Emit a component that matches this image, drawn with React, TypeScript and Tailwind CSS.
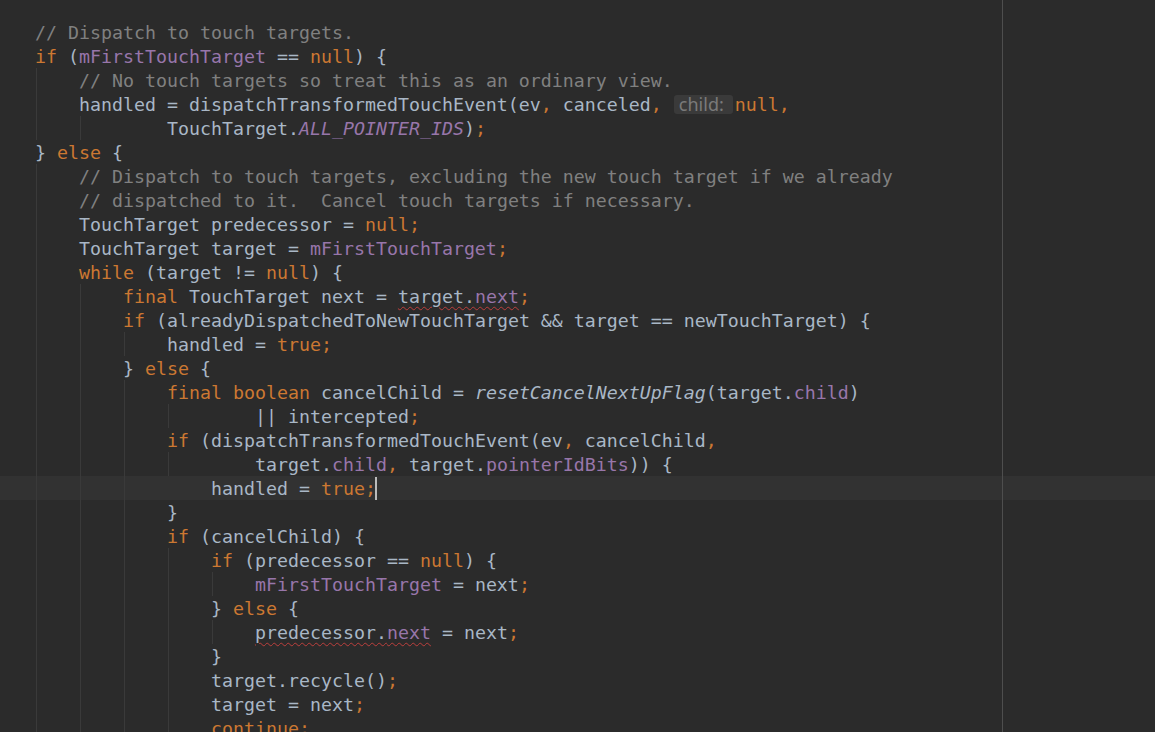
import React from 'react';

type Kind = 'd' | 'k' | 'f' | 'c' | 'i' | 's';
type Seg =
  | { t: string; k?: Kind }
  | { err: { t: string; k?: Kind }[] }
  | { hint: string };

const tone: Record<Kind, string> = {
  d: '',
  k: 'text-[#cc7832]',
  f: 'text-[#9876aa]',
  c: 'text-[#808080]',
  i: 'italic',
  s: 'italic text-[#9876aa]',
};

const guideLeft: Record<number, string> = {
  0: 'left-[36px]',
  4: 'left-[80px]',
  8: 'left-[124px]',
  12: 'left-[168px]',
  16: 'left-[212px]',
};

const s = (t: string, k?: Kind): Seg => ({ t, k });

// each line: segments + indent guide columns
const lines: { segs: Seg[]; guides: number[] }[] = [
  { segs: [s('// Dispatch to touch targets.', 'c')], guides: [] },
  { segs: [s('if', 'k'), s(' ('), s('mFirstTouchTarget', 'f'), s(' == '), s('null', 'k'), s(') {')], guides: [] },
  { segs: [s('    '), s('// No touch targets so treat this as an ordinary view.', 'c')], guides: [0] },
  {
    segs: [
      s('    handled = dispatchTransformedTouchEvent(ev'),
      s(',', 'k'),
      s(' canceled'),
      s(',', 'k'),
      s(' '),
      { hint: 'child:' },
      s('null', 'k'),
      s(',', 'k'),
    ],
    guides: [0],
  },
  { segs: [s('            TouchTarget.'), s('ALL_POINTER_IDS', 's'), s(')'), s(';', 'k')], guides: [0, 4] },
  { segs: [s('} '), s('else', 'k'), s(' {')], guides: [] },
  { segs: [s('    '), s('// Dispatch to touch targets, excluding the new touch target if we already', 'c')], guides: [0] },
  { segs: [s('    '), s('// dispatched to it.  Cancel touch targets if necessary.', 'c')], guides: [0] },
  { segs: [s('    TouchTarget predecessor = '), s('null', 'k'), s(';', 'k')], guides: [0] },
  { segs: [s('    TouchTarget target = '), s('mFirstTouchTarget', 'f'), s(';', 'k')], guides: [0] },
  { segs: [s('    '), s('while', 'k'), s(' (target != '), s('null', 'k'), s(') {')], guides: [0] },
  {
    segs: [s('        '), s('final', 'k'), s(' TouchTarget next = '), { err: [{ t: 'target.' }, { t: 'next', k: 'f' }] }, s(';', 'k')],
    guides: [0, 4],
  },
  {
    segs: [s('        '), s('if', 'k'), s(' (alreadyDispatchedToNewTouchTarget && target == newTouchTarget) {')],
    guides: [0, 4],
  },
  { segs: [s('            handled = '), s('true', 'k'), s(';', 'k')], guides: [0, 4, 8] },
  { segs: [s('        } '), s('else', 'k'), s(' {')], guides: [0, 4] },
  {
    segs: [
      s('            '),
      s('final boolean', 'k'),
      s(' cancelChild = '),
      s('resetCancelNextUpFlag', 'i'),
      s('(target.'),
      s('child', 'f'),
      s(')'),
    ],
    guides: [0, 4, 8],
  },
  { segs: [s('                    || intercepted'), s(';', 'k')], guides: [0, 4, 8, 12] },
  {
    segs: [s('            '), s('if', 'k'), s(' (dispatchTransformedTouchEvent(ev'), s(',', 'k'), s(' cancelChild'), s(',', 'k')],
    guides: [0, 4, 8],
  },
  {
    segs: [s('                    target.'), s('child', 'f'), s(',', 'k'), s(' target.'), s('pointerIdBits', 'f'), s(')) {')],
    guides: [0, 4, 8, 12],
  },
  { segs: [s('                handled = '), s('true', 'k'), s(';', 'k')], guides: [0, 4, 8] },
  { segs: [s('            }')], guides: [0, 4, 8] },
  { segs: [s('            '), s('if', 'k'), s(' (cancelChild) {')], guides: [0, 4, 8] },
  { segs: [s('                '), s('if', 'k'), s(' (predecessor == '), s('null', 'k'), s(') {')], guides: [0, 4, 8, 12] },
  { segs: [s('                    '), s('mFirstTouchTarget', 'f'), s(' = next'), s(';', 'k')], guides: [0, 4, 8, 12, 16] },
  { segs: [s('                } '), s('else', 'k'), s(' {')], guides: [0, 4, 8, 12] },
  {
    segs: [s('                    '), { err: [{ t: 'predecessor.' }, { t: 'next', k: 'f' }] }, s(' = next'), s(';', 'k')],
    guides: [0, 4, 8, 12, 16],
  },
  { segs: [s('                }')], guides: [0, 4, 8, 12] },
  { segs: [s('                target.recycle()'), s(';', 'k')], guides: [0, 4, 8, 12] },
  { segs: [s('                target = next'), s(';', 'k')], guides: [0, 4, 8, 12] },
  { segs: [s('                '), s('continue', 'k'), s(';', 'k')], guides: [0, 4, 8, 12] },
];

const CURRENT = 19;

function Segment({ seg }: { seg: Seg }) {
  if ('hint' in seg) {
    return (
      <span className="relative -top-px mr-[2px] ml-px inline-block h-[19px] w-[59px] rounded-[3px] bg-[#3a3a3a] pl-[5px] align-[-1px] font-['Noto_Sans',sans-serif] text-[18px] leading-[19px] text-[#7a7a7a]">
        {seg.hint}
      </span>
    );
  }
  if ('err' in seg) {
    return (
      <span className="underline decoration-[#bc3f3c] decoration-wavy decoration-1 underline-offset-[3px]">
        {seg.err.map((p, i) => (
          <span key={i} className={tone[p.k ?? 'd']}>
            {p.t}
          </span>
        ))}
      </span>
    );
  }
  return <span className={tone[seg.k ?? 'd']}>{seg.t}</span>;
}

export default function App() {
  return (
    <div className="relative h-[732px] w-full overflow-hidden bg-[#2b2b2b] font-['DejaVu_Sans_Mono',monospace] text-[18.27px] text-[#a9b7c6]">
      <div className="pt-5">
        {lines.map((line, n) => (
          <div
            key={n}
            className={`relative h-6 whitespace-pre pl-[35px] leading-6 ${n === CURRENT ? 'bg-[#323232]' : ''}`}
          >
            {line.guides.map((g) => (
              <span key={g} className={`absolute top-0 h-6 w-px bg-[#3a3a3a] ${guideLeft[g]}`} />
            ))}
            <span className="relative top-px">
              {line.segs.map((seg, i) => (
                <Segment key={i} seg={seg} />
              ))}
            </span>
            {n === CURRENT && <span className="absolute top-px left-[375px] h-[23px] w-[2px] bg-[#bbbbbb]" />}
          </div>
        ))}
      </div>
      {/* right margin */}
      <div className="absolute top-0 bottom-0 left-[1002px] w-px bg-[#4e4e4e]" />
    </div>
  );
}
